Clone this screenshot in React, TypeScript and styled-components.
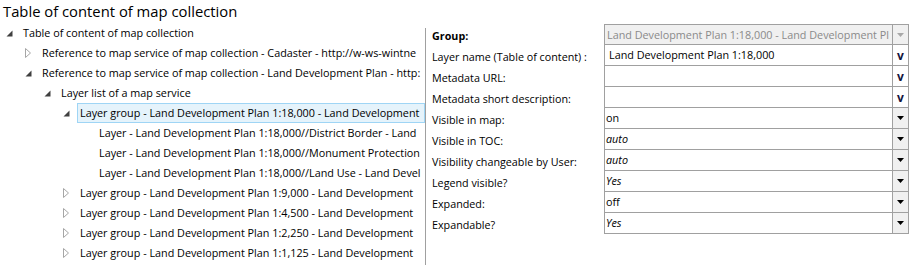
import React from "react";
import styled, { createGlobalStyle } from "styled-components";

const GlobalStyle = createGlobalStyle`
  body {
    margin: 0;
    background: #ffffff;
    font-family: "Open Sans", "Noto Sans", sans-serif;
    color: #000000;
  }
`;

const Page = styled.div`
  width: 913px;
  height: 265px;
  overflow: hidden;
  display: flex;
  flex-direction: column;
`;

const Title = styled.div`
  height: 23px;
  padding-left: 3px;
  font-size: 14.8px;
  line-height: 23px;
  white-space: nowrap;
`;

const Main = styled.div`
  flex: 1;
  display: flex;
`;

const TreePanel = styled.div`
  width: 425px;
  display: flex;
  flex-direction: column;
`;

const Divider = styled.div`
  width: 1px;
  margin-top: 5px;
  background: #a0a0a0;
`;

const Row = styled.div<{ level: number }>`
  height: 20px;
  display: flex;
  align-items: center;
  padding-left: ${(p) => 4 + p.level * 19}px;
  font-size: 10.8px;
`;

const Toggle = styled.span`
  width: 19px;
  flex: none;
  display: flex;
  align-items: center;
  padding-left: 2px;
  box-sizing: border-box;
`;

const Label = styled.span<{ selected?: boolean }>`
  flex: 1;
  min-width: 0;
  height: 20px;
  line-height: 18px;
  box-sizing: border-box;
  padding: 0 8px 0 2px;
  margin-left: -3px;
  white-space: nowrap;
  overflow: hidden;
  border: 1px solid ${(p) => (p.selected ? "#9fd5f5" : "transparent")};
  background: ${(p) => (p.selected ? "#e5f3fb" : "transparent")};
`;

const PropsPanel = styled.div`
  flex: 1;
  padding: 1px 0 0 6px;
`;

const Grid = styled.div`
  display: grid;
  grid-template-columns: 172px 305px;
  grid-auto-rows: 21px;
`;

const PropLabel = styled.div<{ bold?: boolean }>`
  font-size: 10.75px;
  height: 21px;
  box-sizing: border-box;
  padding-top: 3px;
  line-height: 18px;
  font-weight: ${(p) => (p.bold ? 700 : 400)};
  white-space: nowrap;
`;

const Field = styled.div<{ first?: boolean; disabled?: boolean }>`
  display: flex;
  height: 21px;
  box-sizing: border-box;
  border: 1px solid #a0a0a0;
  border-top-width: ${(p) => (p.first ? 1 : 0)}px;
  background: ${(p) => (p.disabled ? "#f0f0f0" : "#ffffff")};
`;

const Value = styled.div<{ italic?: boolean; disabled?: boolean; inset: number }>`
  flex: 1;
  min-width: 0;
  font-size: 10.8px;
  line-height: 19px;
  padding-left: ${(p) => p.inset}px;
  white-space: nowrap;
  overflow: hidden;
  font-style: ${(p) => (p.italic ? "italic" : "normal")};
  color: ${(p) => (p.disabled ? "#8a8a8a" : "#000000")};
`;

const DropButton = styled.div<{ disabled?: boolean }>`
  width: 15px;
  flex: none;
  border-left: 1px solid #a0a0a0;
  background: #f0f0f0;
  display: flex;
  align-items: center;
  justify-content: center;
  color: ${(p) => (p.disabled ? "#a8a8a8" : "#000000")};
`;

const EditButton = styled.div`
  width: 15px;
  flex: none;
  border-left: 1px solid #a0a0a0;
  background: #ffffff;
  display: flex;
  align-items: center;
  justify-content: center;
  font-size: 12px;
  font-weight: 700;
  color: #14143c;
  line-height: 19px;
`;

const Expanded = () => (
  <svg width="7" height="7" viewBox="0 0 7 7">
    <polygon points="6.5,0.5 6.5,6.5 0.5,6.5" fill="#404040" />
  </svg>
);

const Collapsed = () => (
  <svg width="7" height="10" viewBox="0 0 7 10">
    <polygon points="0.5,0.5 5.5,5 0.5,9.5" fill="none" stroke="#a6a6a6" />
  </svg>
);

const Arrow = () => (
  <svg width="7" height="4" viewBox="0 0 7 4">
    <polygon points="0,0 7,0 3.5,4" fill="currentColor" />
  </svg>
);

type TreeItem = { level: number; text: string; state?: "open" | "closed"; selected?: boolean };

const tree: TreeItem[] = [
  { level: 0, state: "open", text: "Table of content of map collection" },
  { level: 1, state: "closed", text: "Reference to map service of map collection - Cadaster - http://w-ws-wintne" },
  { level: 1, state: "open", text: "Reference to map service of map collection - Land Development Plan - http:" },
  { level: 2, state: "open", text: "Layer list of a map service" },
  { level: 3, state: "open", selected: true, text: "Layer group - Land Development Plan 1:18,000 - Land Development" },
  { level: 4, text: "Layer - Land Development Plan 1:18,000//District Border - Land" },
  { level: 4, text: "Layer - Land Development Plan 1:18,000//Monument Protection" },
  { level: 4, text: "Layer - Land Development Plan 1:18,000//Land Use - Land Devel" },
  { level: 3, state: "closed", text: "Layer group - Land Development Plan 1:9,000 - Land Development" },
  { level: 3, state: "closed", text: "Layer group - Land Development Plan 1:4,500 - Land Development" },
  { level: 3, state: "closed", text: "Layer group - Land Development Plan 1:2,250 - Land Development" },
  { level: 3, state: "closed", text: "Layer group - Land Development Plan 1:1,125 - Land Development" },
];

type Prop = {
  label: string;
  value: string;
  kind: "combo" | "text";
  bold?: boolean;
  italic?: boolean;
  disabled?: boolean;
};

const properties: Prop[] = [
  { label: "Group:", bold: true, kind: "combo", disabled: true, value: "Land Development Plan 1:18,000 - Land Development Pl" },
  { label: "Layer name (Table of content) :", kind: "text", value: "Land Development Plan 1:18,000" },
  { label: "Metadata URL:", kind: "text", value: "" },
  { label: "Metadata short description:", kind: "text", value: "" },
  { label: "Visible in map:", kind: "combo", value: "on" },
  { label: "Visible in TOC:", kind: "combo", italic: true, value: "auto" },
  { label: "Visibility changeable by User:", kind: "combo", italic: true, value: "auto" },
  { label: "Legend visible?", kind: "combo", italic: true, value: "Yes" },
  { label: "Expanded:", kind: "combo", value: "off" },
  { label: "Expandable?", kind: "combo", italic: true, value: "Yes" },
];

export default function App() {
  return (
    <Page>
      <GlobalStyle />
      <Title>Table of content of map collection</Title>
      <Main>
        <TreePanel>
          {tree.map((item, i) => (
            <Row key={i} level={item.level}>
              <Toggle>
                {item.state === "open" && <Expanded />}
                {item.state === "closed" && <Collapsed />}
              </Toggle>
              <Label selected={item.selected}>{item.text}</Label>
            </Row>
          ))}
        </TreePanel>
        <Divider />
        <PropsPanel>
          <Grid>
            {properties.map((p, i) => (
              <React.Fragment key={i}>
                <PropLabel bold={p.bold}>{p.label}</PropLabel>
                <Field first={i === 0} disabled={p.disabled}>
                  <Value
                    italic={p.italic}
                    disabled={p.disabled}
                    inset={p.kind === "text" ? 4 : p.disabled ? 2 : 1}
                  >
                    {p.value}
                  </Value>
                  {p.kind === "combo" ? (
                    <DropButton disabled={p.disabled}>
                      <Arrow />
                    </DropButton>
                  ) : (
                    <EditButton>v</EditButton>
                  )}
                </Field>
              </React.Fragment>
            ))}
          </Grid>
        </PropsPanel>
      </Main>
    </Page>
  );
}
